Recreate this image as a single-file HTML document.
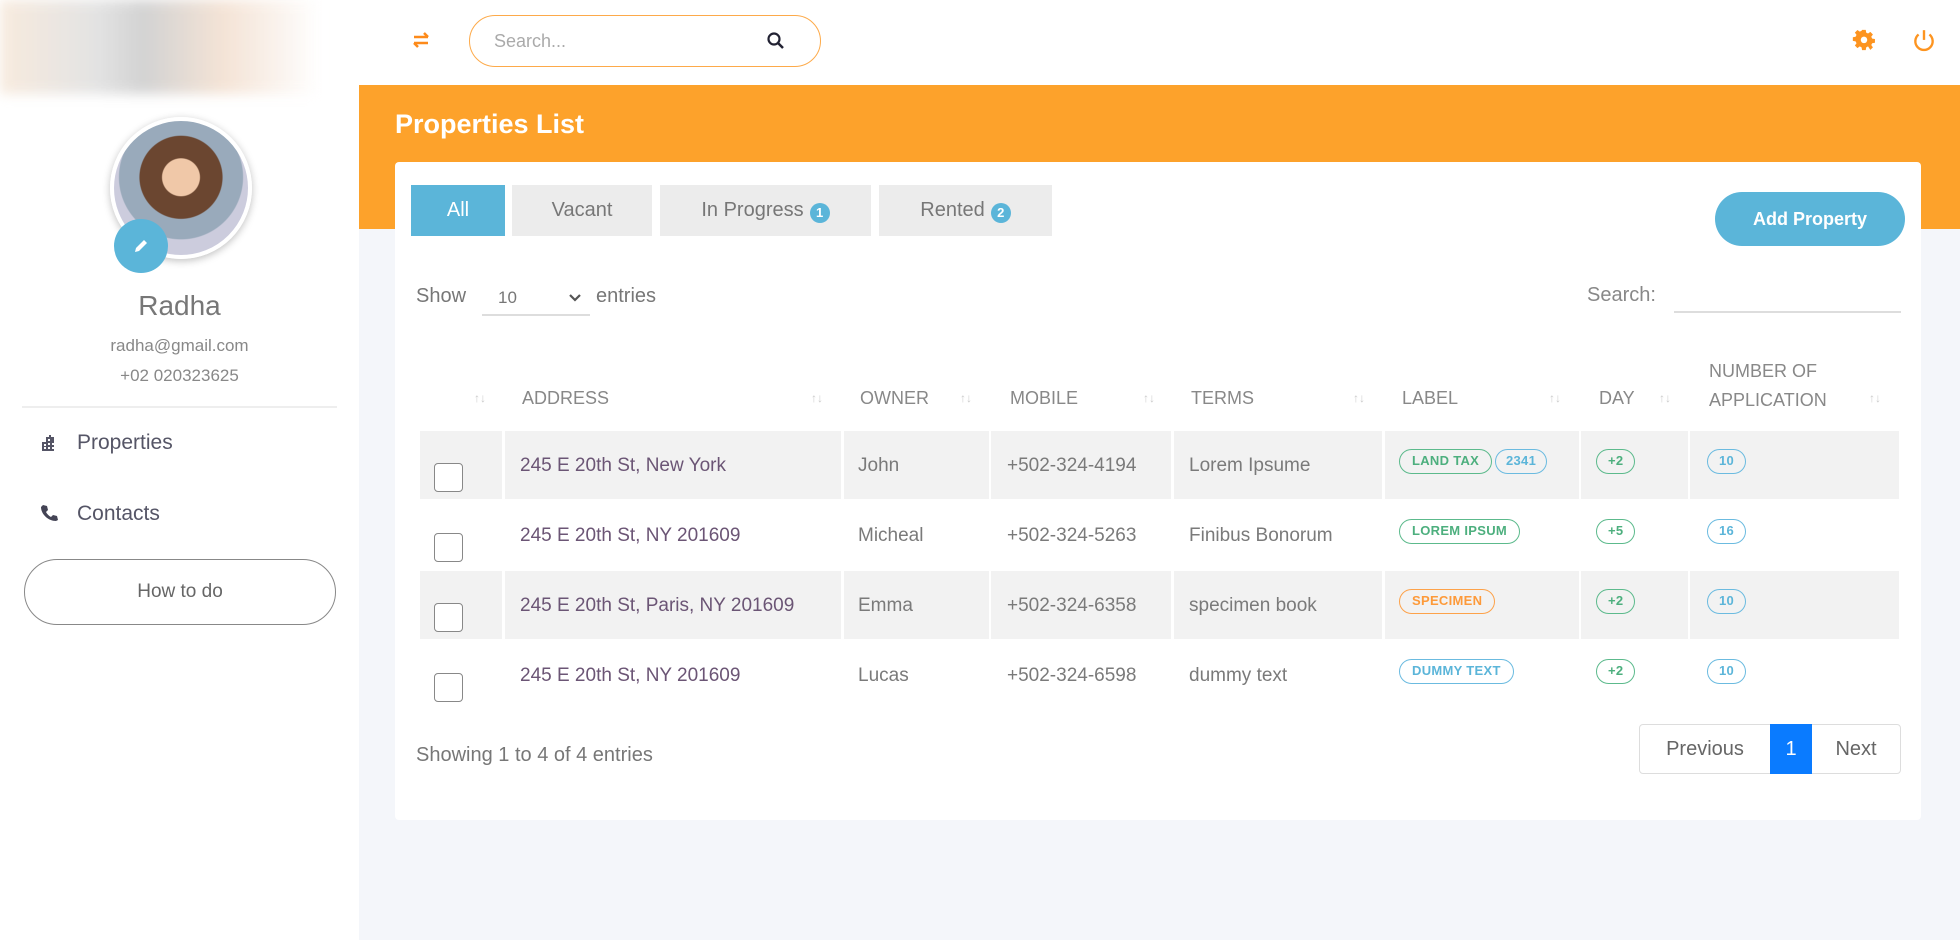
<!DOCTYPE html>
<html><head><meta charset="utf-8"><style>
*{box-sizing:border-box;margin:0;padding:0}
body{width:1960px;height:940px;position:relative;overflow:hidden;background:#f4f6fa;font-family:"Liberation Sans",sans-serif;color:#777}
.a{position:absolute}
.side{left:0;top:0;width:359px;height:940px;background:#fff}
.top{left:359px;top:0;width:1601px;height:85px;background:#fff}
.band{left:359px;top:85px;width:1601px;height:144px;background:#fda22b}
.card{left:395px;top:162px;width:1526px;height:658px;background:#fff;border-radius:4px}
.tab{top:185px;height:51px;background:#ececec;color:#777;font-size:20px;display:flex;align-items:center;justify-content:center}
.bd{display:inline-block;width:20px;height:20px;border-radius:50%;background:#5bb5d9;color:#fff;font-size:13px;font-weight:bold;text-align:center;line-height:20px;margin-left:6px;margin-top:4px}
.h{top:386px;font-size:18px;color:#888;line-height:24px}
.s{font-size:12px;color:#ccc;top:391px}
.c{background:#f2f2f2}
.t{font-size:19px;color:#7a7a7a;line-height:20px}
.ad{color:#6b5575}
.cb{width:29px;height:29px;border:1.5px solid #888;border-radius:4px;background:#fff}
.p{height:25px;border-radius:13px;border:1.5px solid;font-size:13px;font-weight:bold;line-height:22px;padding:0 12px;background:transparent;letter-spacing:.3px}
.g{border-color:#5cba8c;color:#4daf7e}
.b{border-color:#6bbbe0;color:#5bb5d9}
.o{border-color:#fda24a;color:#fd9a3a}
</style></head><body>
<div class="a side">
 <div class="a" style="left:0;top:0;width:319px;height:94px;background:linear-gradient(90deg,#f6e6d6,#ddd 30%,#c8c8c8 45%,#f2ddcc 70%,#fff);filter:blur(6px);opacity:.8"></div>
 <div class="a" style="left:110px;top:117px;width:142px;height:142px;border-radius:50%;background:radial-gradient(circle at 50% 42%,#f0c8a8 0 18%,#6b4630 19% 40%,#9ab 41% 60%,#ccd 61%);border:4px solid #fff;box-shadow:0 2px 8px rgba(0,0,0,.25)"></div>
 <div class="a" style="left:114px;top:219px;width:54px;height:54px;border-radius:50%;background:#5bb5d9"></div>
 <svg class="a" style="left:131px;top:236px" width="20" height="20" viewBox="0 0 20 20"><path d="M4 16l1-4 8-8 3 3-8 8z" fill="#fff"/></svg>
 <div class="a" style="left:0;width:359px;top:290px;text-align:center;font-size:28px;color:#777">Radha</div>
 <div class="a" style="left:0;width:359px;top:336px;text-align:center;font-size:17px;color:#888">radha@gmail.com</div>
 <div class="a" style="left:0;width:359px;top:366px;text-align:center;font-size:17px;color:#888">+02 020323625</div>
 <div class="a" style="left:22px;top:406px;width:315px;height:2px;background:#eee"></div>
 <svg class="a" style="left:40px;top:434px" width="18" height="18" viewBox="0 0 18 18"><path d="M2 17V8h4V3h3V1h2v2h3v14zM4 10h2v2H4zm4-5h2v2H8zm0 4h2v2H8zm4 0h2v2h-2zM4 13h2v2H4zm4 0h2v2H8zm4 0h2v2h-2z" fill="#556" fill-rule="evenodd"/></svg>
 <div class="a" style="left:77px;top:431px;font-size:21px;color:#556">Properties</div>
 <svg class="a" style="left:40px;top:504px" width="18" height="18" viewBox="0 0 18 18"><path d="M3 1l4 1 1 4-2 2c1 2 3 4 5 5l2-2 4 1 1 4-2 1C8 17 1 10 1 3z" fill="#445"/></svg>
 <div class="a" style="left:77px;top:502px;font-size:21px;color:#556">Contacts</div>
 <div class="a" style="left:24px;top:559px;width:312px;height:66px;border:1.5px solid #888;border-radius:33px;text-align:center;line-height:63px;font-size:19px;color:#666">How to do</div>
</div>
<div class="a top">
 <svg class="a" style="left:50px;top:30px" width="24" height="20" viewBox="0 0 24 20"><path d="M5 7h14M15 3l4 4M19 13H5M9 17l-4-4" stroke="#fd8a1a" stroke-width="2.5" fill="none"/></svg>
 <div class="a" style="left:110px;top:15px;width:352px;height:52px;border:1.5px solid #fdaa4a;border-radius:26px"></div>
 <div class="a" style="left:135px;top:31px;font-size:18px;color:#aaa">Search...</div>
 <svg class="a" style="left:407px;top:31px" width="20" height="20" viewBox="0 0 20 20"><circle cx="8" cy="8" r="5.5" stroke="#223" stroke-width="2.2" fill="none"/><path d="M12 12l5 5" stroke="#223" stroke-width="2.5"/></svg>
 <svg class="a" style="left:1492px;top:28px" width="26" height="26" viewBox="0 0 24 24"><path d="M10 2h4l.5 3 2 1 2.5-1.8 2.8 2.8L20 9.5l1 2 3 .5v4l-3 .5-1 2 1.8 2.5-2.8 2.8L16.5 20l-2 1-.5 3h-4l-.5-3-2-1-2.5 1.8-2.8-2.8L4 16.5l-1-2-3-.5v-4l3-.5 1-2L2.2 5 5 2.2 7.5 4l2-1z" transform="scale(.85) translate(2 0)" fill="#fd9420"/><circle cx="12" cy="11" r="3" fill="#fff"/></svg>
 <svg class="a" style="left:1552px;top:28px" width="26" height="26" viewBox="0 0 24 24"><path d="M7 6a8 8 0 1 0 10 0" stroke="#fd9420" stroke-width="2.2" fill="none"/><path d="M12 2v9" stroke="#fd9420" stroke-width="2.2"/></svg>
</div>
<div class="a band"><div class="a" style="left:36px;top:24px;font-size:27px;color:#fff;font-weight:bold">Properties List</div></div>
<div class="a card"></div>
<div class="a tab" style="left:411px;width:94px;background:#5bb5d9;color:#fff">All</div>
<div class="a tab" style="left:512px;width:140px">Vacant</div>
<div class="a tab" style="left:660px;width:211px">In Progress<span class="bd">1</span></div>
<div class="a tab" style="left:879px;width:173px">Rented<span class="bd">2</span></div>
<div class="a" style="left:1715px;top:192px;width:190px;height:54px;border-radius:27px;background:#5bb5d9;color:#fff;font-size:18px;font-weight:bold;text-align:center;line-height:54px">Add Property</div>
<div class="a" style="left:416px;top:285px;font-size:20px;color:#777">Show</div>
<div class="a" style="left:498px;top:288px;font-size:17px;color:#777">10</div>
<svg class="a" style="left:568px;top:290px" width="14" height="14" viewBox="0 0 14 14"><path d="M2 5l5 5 5-5" stroke="#555" stroke-width="2.2" fill="none"/></svg>
<div class="a" style="left:482px;top:314px;width:108px;height:1.5px;background:#ddd"></div>
<div class="a" style="left:596px;top:285px;font-size:20px;color:#777">entries</div>
<div class="a" style="left:1587px;top:284px;font-size:20px;color:#888">Search:</div>
<div class="a" style="left:1674px;top:311px;width:227px;height:1.5px;background:#ddd"></div>

<div class="a s" style="left:474px">↑↓</div>
<div class="a h" style="left:522px">ADDRESS</div><div class="a s" style="left:811px">↑↓</div>
<div class="a h" style="left:860px">OWNER</div><div class="a s" style="left:960px">↑↓</div>
<div class="a h" style="left:1010px">MOBILE</div><div class="a s" style="left:1143px">↑↓</div>
<div class="a h" style="left:1191px">TERMS</div><div class="a s" style="left:1353px">↑↓</div>
<div class="a h" style="left:1402px">LABEL</div><div class="a s" style="left:1549px">↑↓</div>
<div class="a h" style="left:1599px">DAY</div><div class="a s" style="left:1659px">↑↓</div>
<div class="a h" style="left:1709px;top:357px;line-height:29px">NUMBER OF<br>APPLICATION</div><div class="a s" style="left:1869px">↑↓</div>

<div class="a c" style="left:420px;top:431px;width:82px;height:68px"></div>
<div class="a c" style="left:505px;top:431px;width:336px;height:68px"></div>
<div class="a c" style="left:844px;top:431px;width:145px;height:68px"></div>
<div class="a c" style="left:991px;top:431px;width:180px;height:68px"></div>
<div class="a c" style="left:1174px;top:431px;width:208px;height:68px"></div>
<div class="a c" style="left:1385px;top:431px;width:194px;height:68px"></div>
<div class="a c" style="left:1581px;top:431px;width:107px;height:68px"></div>
<div class="a c" style="left:1690px;top:431px;width:209px;height:68px"></div>
<div class="a c" style="left:420px;top:571px;width:82px;height:68px"></div>
<div class="a c" style="left:505px;top:571px;width:336px;height:68px"></div>
<div class="a c" style="left:844px;top:571px;width:145px;height:68px"></div>
<div class="a c" style="left:991px;top:571px;width:180px;height:68px"></div>
<div class="a c" style="left:1174px;top:571px;width:208px;height:68px"></div>
<div class="a c" style="left:1385px;top:571px;width:194px;height:68px"></div>
<div class="a c" style="left:1581px;top:571px;width:107px;height:68px"></div>
<div class="a c" style="left:1690px;top:571px;width:209px;height:68px"></div>

<div class="a cb" style="left:434px;top:463px"></div>
<div class="a t ad" style="left:520px;top:456px">245 E 20th St, New York</div>
<div class="a t" style="left:858px;top:456px">John</div>
<div class="a t" style="left:1007px;top:456px">+502-324-4194</div>
<div class="a t" style="left:1189px;top:456px">Lorem Ipsume</div>
<div class="a p g" style="left:1399px;top:449px">LAND TAX</div>
<div class="a p b" style="left:1495px;top:449px;padding:0 10px">2341</div>
<div class="a p g" style="left:1596px;top:449px;padding:0 11px">+2</div>
<div class="a p b" style="left:1707px;top:449px;padding:0 11px">10</div>

<div class="a cb" style="left:434px;top:533px"></div>
<div class="a t ad" style="left:520px;top:526px">245 E 20th St, NY 201609</div>
<div class="a t" style="left:858px;top:526px">Micheal</div>
<div class="a t" style="left:1007px;top:526px">+502-324-5263</div>
<div class="a t" style="left:1189px;top:526px">Finibus Bonorum</div>
<div class="a p g" style="left:1399px;top:519px">LOREM IPSUM</div>
<div class="a p g" style="left:1596px;top:519px;padding:0 11px">+5</div>
<div class="a p b" style="left:1707px;top:519px;padding:0 11px">16</div>

<div class="a cb" style="left:434px;top:603px"></div>
<div class="a t ad" style="left:520px;top:596px">245 E 20th St, Paris, NY 201609</div>
<div class="a t" style="left:858px;top:596px">Emma</div>
<div class="a t" style="left:1007px;top:596px">+502-324-6358</div>
<div class="a t" style="left:1189px;top:596px">specimen book</div>
<div class="a p o" style="left:1399px;top:589px">SPECIMEN</div>
<div class="a p g" style="left:1596px;top:589px;padding:0 11px">+2</div>
<div class="a p b" style="left:1707px;top:589px;padding:0 11px">10</div>

<div class="a cb" style="left:434px;top:673px"></div>
<div class="a t ad" style="left:520px;top:666px">245 E 20th St, NY 201609</div>
<div class="a t" style="left:858px;top:666px">Lucas</div>
<div class="a t" style="left:1007px;top:666px">+502-324-6598</div>
<div class="a t" style="left:1189px;top:666px">dummy text</div>
<div class="a p b" style="left:1399px;top:659px">DUMMY TEXT</div>
<div class="a p g" style="left:1596px;top:659px;padding:0 11px">+2</div>
<div class="a p b" style="left:1707px;top:659px;padding:0 11px">10</div>

<div class="a" style="left:416px;top:744px;font-size:20px;color:#777">Showing 1 to 4 of 4 entries</div>
<div class="a" style="left:1639px;top:724px;width:262px;height:50px;border:1.5px solid #ddd;border-radius:4px"></div>
<div class="a" style="left:1640px;top:725px;width:130px;height:48px;line-height:48px;text-align:center;font-size:20px;color:#666">Previous</div>
<div class="a" style="left:1770px;top:724px;width:42px;height:50px;background:#0a7bff;color:#fff;line-height:50px;text-align:center;font-size:20px">1</div>
<div class="a" style="left:1812px;top:725px;width:88px;height:48px;line-height:48px;text-align:center;font-size:20px;color:#666">Next</div>
</body></html>
